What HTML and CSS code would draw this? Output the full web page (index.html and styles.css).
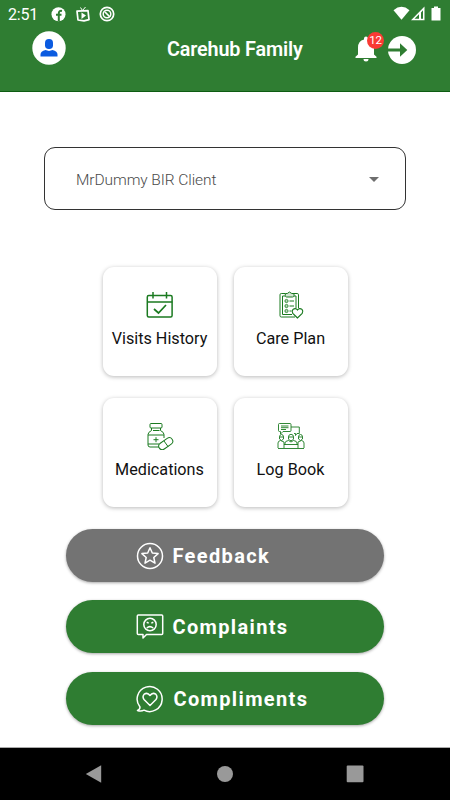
FILE: index.html
```html
<!DOCTYPE html>
<html lang="en">
  <head>
    <meta charset="UTF-8" />
    <meta name="viewport" content="width=device-width, initial-scale=1.0" />
    <title>Carehub Family</title>
    <link rel="stylesheet" href="styles.css">
  </head>
  <body>
    <header class="header">
      <div class="status-bar">
        <span class="time">2:51</span>
        <svg class="status-left" width="66" height="18" viewBox="0 0 66 18">
          <circle cx="7.5" cy="9.3" r="7" fill="#fff" />
          <path d="M7.8 16.2V8.2q0-2.8 3.2-2.3M5 9.8h5.5" fill="none" stroke="#2f7d32" stroke-width="2" />
          <g fill="none" stroke="#fff">
            <path d="M26 6.200l11-.6 1 9-5 1.200-6-.800z" stroke-width="1.700" stroke-linejoin="round" />
            <path d="M29.500 2.500l2 3 3-3.500" stroke-width="1" />
            <circle cx="56" cy="9" r="6.700" stroke-width="1.700" />
            <circle cx="56" cy="9" r="3.800" stroke-width="1.500" />
            <path d="M54 7l5 5" stroke-width="1.700" />
          </g>
          <path d="M30.500 7.500v6.500l4.500-3.500z" fill="#fff" />
        </svg>
        <svg class="status-right" width="50" height="18" viewBox="0 0 50 18" fill="#fff">
          <path d="M0.500 5.200Q8.500-1.500 16.500 5.200L8.500 14.800z" />
          <path fill-rule="evenodd" d="M18 15.300L31.500 1.500v13.800zM21.500 13.800H26V9.200zM28 7.500v6.300h2V5.300z" />
          <path d="M41 1.500h4V3h2.500v12.500h-9V3H41z" />
        </svg>
      </div>
      <div class="title-bar">
        <svg class="avatar" width="34" height="34" viewBox="0 0 34 34">
          <circle cx="17" cy="17" r="16.700" fill="#fff" />
          <rect x="13" y="8" width="8" height="10" rx="3.800" fill="#0b5be0" />
          <path d="M8.500 25.500v-2q0-3.500 5-4.500l3.500 1 3.500-1q5 1 5 4.500v2z" fill="#0b5be0" />
        </svg>
        <h1 class="title">Carehub Family</h1>
        <div class="notifications">
          <svg width="22" height="26" viewBox="0 0 22 26" fill="#fff">
            <path d="M9 2.500a2 2 0 0 1 4 0v1q6 1.500 6 8v7l2.500 2.300V22H.5v-1.200L3 18.500v-7q0-6.500 6-8zM8.500 23h5q0 2.500-2.500 2.500T8.500 23z" />
          </svg>
          <span class="badge">12</span>
        </div>
        <svg class="logout" width="28" height="28" viewBox="0 0 28 28">
          <circle cx="14" cy="14" r="14" fill="#fff" />
          <path d="M0 12.600h12V7.300l7.300 6.700-7.300 6.700v-5.300H0z" fill="#2f7d32" />
        </svg>
      </div>
    </header>

    <main class="content">
      <div class="select">
        <span>MrDummy BIR Client</span>
        <i class="caret"></i>
      </div>

      <div class="cards">
        <div class="card">
          <svg class="card-icon" viewBox="0 0 28 28" stroke-width="1.500">
            <rect x="1.300" y="4.500" width="24.800" height="21.500" rx="1.500" />
            <path d="M1.300 11h25M7 1v6.500M20.500 1v6.500" />
            <path d="M8 18l4.500 4L20 14" stroke-width="1.700" />
          </svg>
          <span>Visits History</span>
        </div>
        <div class="card">
          <svg class="card-icon" viewBox="0 0 28 28" stroke-width="1">
            <path d="M8 2.500H4.300q-1.300 0-1.300 1.300v20.900q0 1.300 1.300 1.300H18M17 2.500h3.200q1.300 0 1.300 1.300V17" />
            <path d="M8 5H5.500v18.500H15M17 5h2v12" />
            <path d="M8.300 2.500h2q2-3 4.500 0h2.200v2q0 1.500-1.500 1.500h-6q-1.200 0-1.200-1.500z" fill="#d3e5d4" />
            <g fill="#b6d4b7" stroke-width=".8">
              <circle cx="9.500" cy="10" r="1.600" />
              <circle cx="9.500" cy="15" r="1.600" />
              <circle cx="9.500" cy="20" r="1.600" />
            </g>
            <path d="M12.500 10h4.500M12.500 15h4.500M12.500 20h2" />
            <path d="M20.500 27l-4.700-4.700q-1.400-2 .2-3.900 2.500-2 4.500.6 2-2.600 4.500-.6 1.600 1.900.2 3.900z" fill="#fff" stroke-width="1.200" />
          </svg>
          <span>Care Plan</span>
        </div>
        <div class="card">
          <svg class="card-icon" viewBox="0 0 28 28" stroke-width="1">
            <rect x="4" y="1.500" width="12" height="4.500" rx="1" />
            <path d="M5.500 6v2.500q-3.500 1.800-3.500 4V23q0 2 2 2h9M14.500 6v2.500q3.500 1.800 3.500 4V16M7 8.500h6.500" />
            <path d="M2 13h16M2 22h11" stroke-width="1.200" />
            <path d="M10 15.200v5M7.500 17.700h5" />
            <rect x="12" y="18.200" width="15.500" height="7" rx="3.500" transform="rotate(-35 19.750 21.700)" fill="#fff" />
            <path d="M18 19l4 5.500" />
          </svg>
          <span>Medications</span>
        </div>
        <div class="card">
          <svg class="card-icon" viewBox="0 0 28 28" stroke-width=".9">
            <path d="M2.500 1.500h10.500q1 0 1 1v6q0 1-1 1H6L3.500 12V9.500h-1q-1 0-1-1v-6q0-1 1-1z" />
            <path d="M4 4h7.500M4 5.700h7.500M4 7.500h5M14 5h8.300v6.500H20l-1.500 2v-2H17" />
            <path d="M2.500 17v-2q0-2.500 2-2.500t2 2.500v2q-2 3-4 0zM21.500 17v-2q0-2.500 2-2.500t2 2.500v2q-2 3-4 0zM11.500 17v-2q0-2.700 2.500-2.700t2.500 2.700v2q-2.500 3.500-5 0zM11.500 15h5M2.500 15h4M21.500 15h4" />
            <path d="M1 26v-5q0-2 2.500-2.500L7 20v6M27 26v-5q0-2-2.500-2.500L21 20v6M8 23v-2q0-2 3.500-2.500L14 20l2.500-1.500Q20 19 20 21v2M7 22.500h14M1 26.500h26" />
          </svg>
          <span>Log Book</span>
        </div>
      </div>

      <div class="buttons">
        <button class="btn feedback">
          <svg class="btn-icon" viewBox="0 0 28 28">
            <circle cx="14" cy="14" r="12.500" />
            <path d="M14 5.700l2.300 5.300 5.800.6-4.300 3.900 1.200 5.700-5-3-5 3 1.200-5.700-4.300-3.900 5.800-.6z" />
          </svg>
          <span>Feedback</span>
        </button>
        <button class="btn complaints">
          <svg class="btn-icon" viewBox="0 0 28 28">
            <path d="M2.300 2h23.400q1 0 1 1v17.500q0 1-1 1H10.500L7 25v-3.500H2.300q-1 0-1-1V3q0-1 1-1z" />
            <circle cx="14" cy="11.500" r="6.200" />
            <path d="M10.800 15q3-2.800 6.400 0M10.700 9.300l2 .8M17.300 9.300l-2 .8" />
          </svg>
          <span>Complaints</span>
        </button>
        <button class="btn compliments">
          <svg class="btn-icon" viewBox="0 0 28 28">
            <path d="M1.500 25.500q2.500-1 2.500-3.500a12.500 12.500 0 1 1 4 3.200q-3 1.500-6.500.3z" />
            <path d="M14 20.500l-6-6q-2-3 .2-5.300Q11.500 7 14 10.500 16.500 7 19.800 9.200q2.200 2.300.2 5.300z" />
          </svg>
          <span>Compliments</span>
        </button>
      </div>
    </main>

    <nav class="nav-bar">
      <svg width="18" height="20" viewBox="0 0 18 20"><path d="M.8 10L16.200 1.200v17.600z" /></svg>
      <svg width="18" height="20" viewBox="0 0 18 20"><circle cx="9" cy="10" r="8" /></svg>
      <svg width="18" height="20" viewBox="0 0 18 20"><rect x=".7" y="1.500" width="16.800" height="16.800" rx="1" /></svg>
    </nav>
  </body>
</html>
```
FILE: styles.css
```css
* {
  box-sizing: border-box;
}

body {
  margin: 0;
  height: 800px;
  display: flex;
  flex-direction: column;
  background: #fff;
  font-family: Roboto, sans-serif;
  overflow: hidden;
}

svg {
  display: block;
  flex: none;
}

.header {
  height: 92px;
  background: #2f7d32;
  border-bottom: 1px solid #0d5c12;
  color: #fff;
}

.status-bar {
  display: flex;
  align-items: center;
  height: 28px;
  padding: 0 8px;
}

.time {
  width: 43px;
  font-size: 16px;
  letter-spacing: -0.2px;
}

.status-left {
  margin-top: -1px;
}

.status-right {
  margin-top: -1px;
  margin-left: auto;
  margin-right: -1px;
}

.title-bar {
  display: flex;
  align-items: center;
  height: 40px;
  padding: 0 34px 0 32px;
}

.title {
  width: 137px;
  margin: 2px 0 0 101px;
  font-size: 19.800px;
  font-weight: 600;
  letter-spacing: -0.15px;
  white-space: nowrap;
}

.notifications {
  position: relative;
  margin: 1px 11px 0 auto;
}

.badge {
  position: absolute;
  top: -4px;
  left: 12px;
  width: 17px;
  height: 17px;
  border-radius: 50%;
  background: #f93a34;
  font-size: 11.500px;
  letter-spacing: -0.3px;
  line-height: 17px;
  text-align: center;
}

.logout {
  margin-top: 3px;
}

.content {
  flex: 1;
  padding-top: 55px;
}

.select {
  display: flex;
  align-items: center;
  justify-content: space-between;
  width: 362px;
  height: 63px;
  margin: 0 auto;
  padding: 2px 26px 0 31px;
  border: 1px solid #333;
  border-radius: 11px;
  color: #4a4a4a;
  font-size: 15.500px;
  font-weight: 300;
  letter-spacing: -0.08px;
}

.caret {
  border: 5.500px solid transparent;
  border-top-color: #6e6e6e;
  border-bottom: 0;
}

.cards {
  display: grid;
  grid-template-columns: 114px 114px;
  grid-auto-rows: 109px;
  gap: 22px 17px;
  justify-content: center;
  margin-top: 56.500px;
}

.card {
  display: flex;
  flex-direction: column;
  align-items: center;
  padding-top: 24px;
  border-radius: 11px;
  background: #fff;
  box-shadow: 0 1px 4px rgba(0, 0, 0, 0.28);
  color: #111;
  font-size: 16.200px;
  white-space: nowrap;
}

.card-icon {
  width: 28px;
  height: 28px;
  margin-bottom: 10.500px;
  fill: none;
  stroke: #1b7a20;
}

.buttons {
  display: flex;
  flex-direction: column;
  align-items: center;
  gap: 18.300px;
  margin-top: 22.700px;
}

.btn {
  display: flex;
  align-items: center;
  width: 318px;
  height: 53px;
  padding: 1px 0 0 69.500px;
  border: 0;
  border-radius: 27px;
  background: #2f7d32;
  box-shadow: 0 1px 3px rgba(0, 0, 0, 0.35);
  color: #fff;
  font-family: inherit;
  font-size: 20px;
  font-weight: 700;
  letter-spacing: 1.350px;
}

.feedback {
  background: #737373;
}

.btn-icon {
  width: 28px;
  height: 28px;
  margin-right: 9px;
  fill: none;
  stroke: #fff;
  stroke-width: 1.500;
  stroke-linejoin: round;
}

.compliments .btn-icon {
  margin-right: 10px;
}

.nav-bar {
  display: flex;
  justify-content: space-between;
  align-items: center;
  height: 53px;
  padding: 0 86px 0 85px;
  border-top: 1px solid #aaa;
  background: #000;
  fill: #999;
}
```
